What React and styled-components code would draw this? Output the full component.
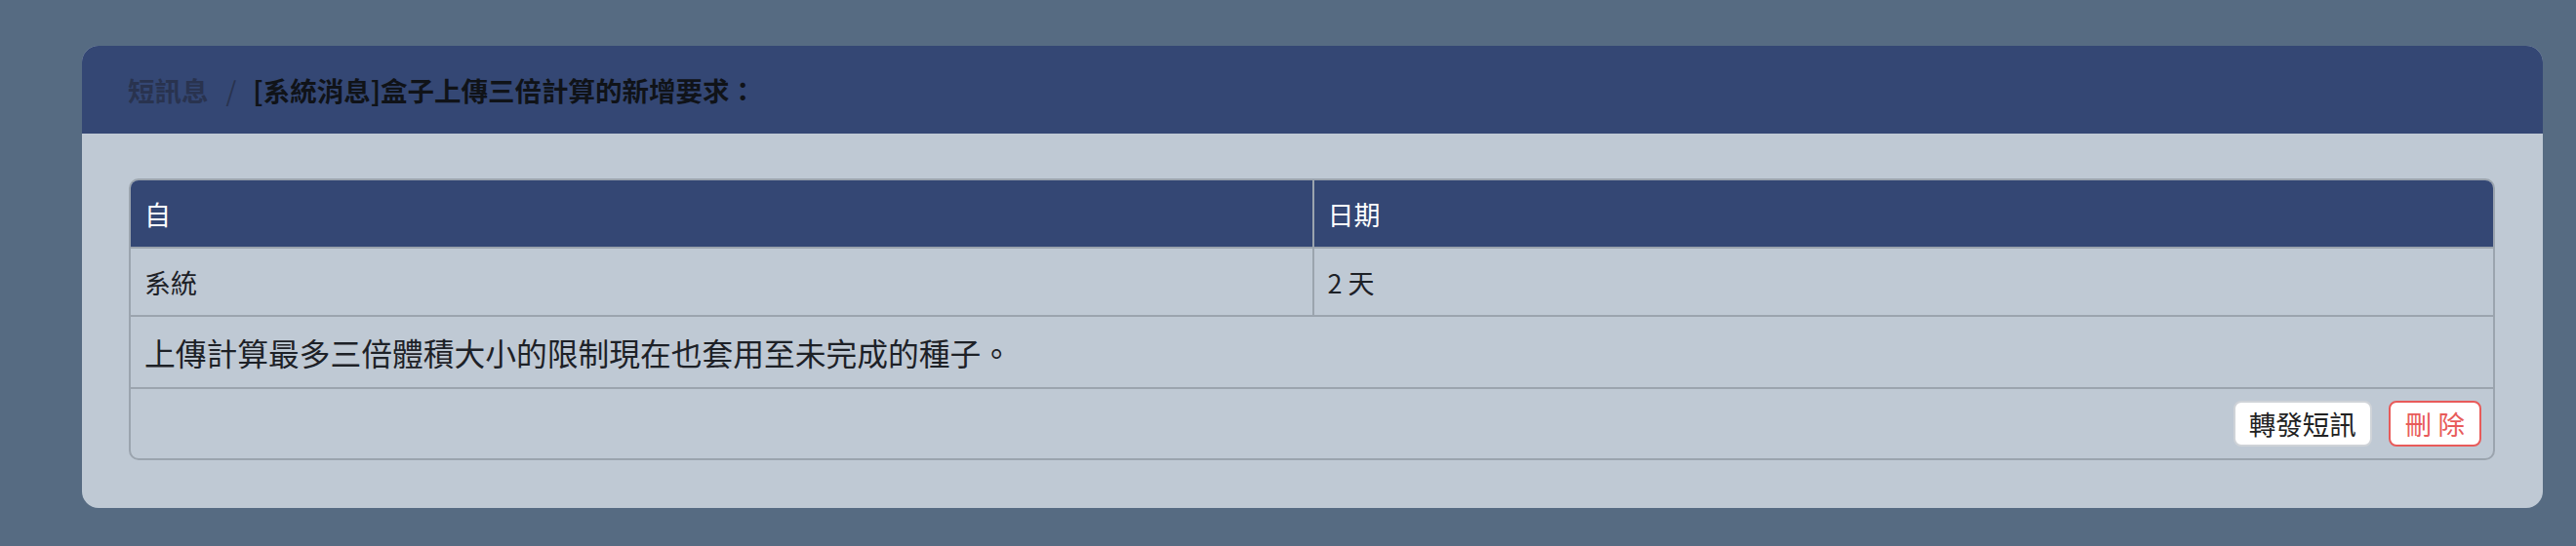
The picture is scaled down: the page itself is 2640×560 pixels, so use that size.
import React from "react";
import styled, { createGlobalStyle } from "styled-components";

const Global = createGlobalStyle`
  html, body { margin: 0; padding: 0; }
  body {
    background: #566b82;
    font-family: "Noto Sans CJK TC", "Noto Sans", "Liberation Sans", sans-serif;
    color: #1d2127;
  }
`;

const Page = styled.div`
  padding: 47px 34px 0 84px;
`;

const Card = styled.section`
  background: #bfc9d4;
  border-radius: 17px;
  overflow: hidden;
`;

const CardHeader = styled.header`
  height: 90px;
  background: #344774;
  display: flex;
  align-items: center;
  padding-left: 47px;
  font-size: 27.5px;
  font-weight: 700;
`;

const Crumb = styled.span`
  color: ${(p) => (p.$active ? "#101318" : "#29334f")};
`;

const Sep = styled.span`
  color: #29334f;
  font-weight: 400;
  margin: 0 17px 0 18px;
`;

const CardBody = styled.div`
  padding: 46px 49px 49px 48px;
`;

const Table = styled.div`
  border: 2px solid #9ba4ae;
  border-radius: 10px;
  overflow: hidden;
`;

const Row = styled.div`
  display: grid;
  grid-template-columns: 1fr 1fr;
  height: ${(p) => p.$h}px;
  background: ${(p) => (p.$head ? "#344774" : "transparent")};
  color: ${(p) => (p.$head ? "#ffffff" : "#1d2127")};
  border-bottom: 2px solid #9ba4ae;
`;

const Cell = styled.div`
  display: flex;
  align-items: center;
  padding: 0 14px;
  font-size: 27px;
  & + & {
    border-left: ${(p) => (p.$head ? "1px solid #24325a" : "2px solid #9ba4ae")};
  }
`;

const Message = styled.div`
  height: 72px;
  display: flex;
  align-items: center;
  padding: 0 14px;
  font-size: 31.75px;
  color: #1d2127;
  border-bottom: 2px solid #9ba4ae;
`;

const Footer = styled.div`
  height: 71px;
  display: flex;
  align-items: center;
  justify-content: flex-end;
  gap: 17px;
  padding: 0 12px;
`;

const Button = styled.button`
  height: 47px;
  box-sizing: border-box;
  padding: 0 ${(p) => (p.$danger ? 15 : 14)}px;
  background: #ffffff;
  border: 2px solid ${(p) => (p.$danger ? "#e85b5a" : "#cfd3d8")};
  color: ${(p) => (p.$danger ? "#e85b5a" : "#222")};
  border-radius: 8px;
  font-family: inherit;
  font-size: 27.5px;
  line-height: 1;
  display: flex;
  align-items: center;
  cursor: pointer;
`;

export default function App() {
  return (
    <>
      <Global />
      <Page>
        <Card>
          <CardHeader>
            <Crumb>短訊息</Crumb>
            <Sep>/</Sep>
            <Crumb $active>[系統消息]盒子上傳三倍計算的新增要求：</Crumb>
          </CardHeader>
          <CardBody>
            <Table>
              <Row $head $h={68}>
                <Cell $head>自</Cell>
                <Cell $head>日期</Cell>
              </Row>
              <Row $h={68}>
                <Cell>系統</Cell>
                <Cell>2 天</Cell>
              </Row>
              <Message>上傳計算最多三倍體積大小的限制現在也套用至未完成的種子。</Message>
              <Footer>
                <Button>轉發短訊</Button>
                <Button $danger>刪 除</Button>
              </Footer>
            </Table>
          </CardBody>
        </Card>
      </Page>
    </>
  );
}
